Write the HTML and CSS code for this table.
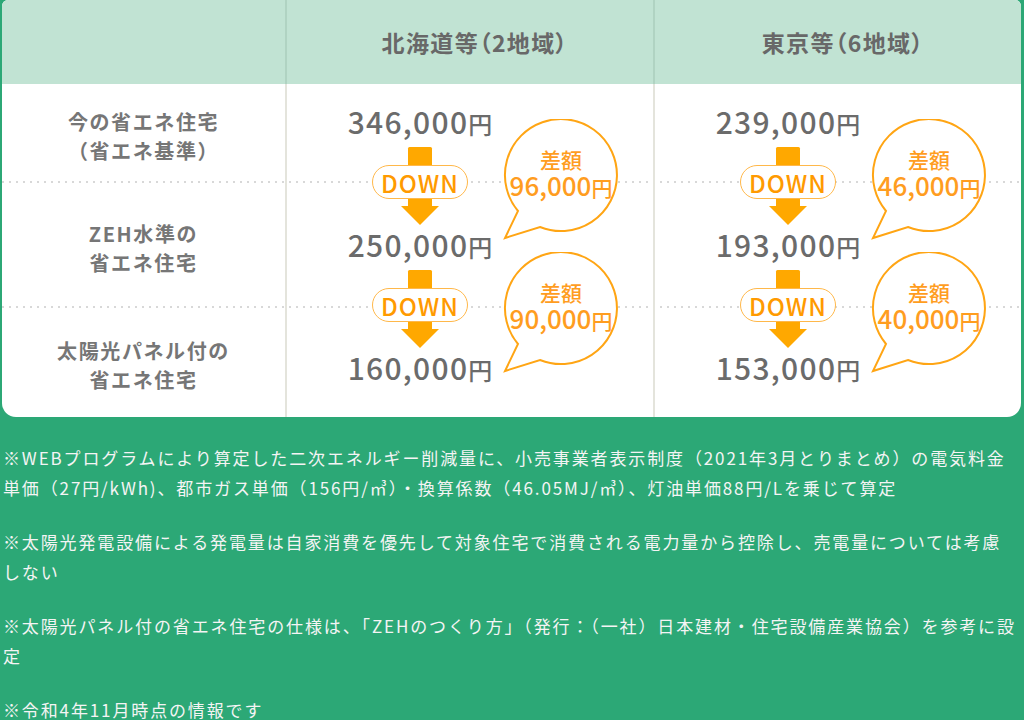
FILE: index.html
```html
<!DOCTYPE html>
<html lang="ja">
<head>
<meta charset="utf-8">
<title>光熱費比較</title>
<link rel="stylesheet" href="styles.css">
</head>
<body>
<div class="card">
  <div class="head">
    <div class="hcell"></div>
    <div class="hcell">北海道等（2地域）</div>
    <div class="hcell">東京等（6地域）</div>
  </div>
  <div class="grid">
    <div class="rowline r1"></div>
    <div class="rowline r2"></div>
    <div class="rowline r3"></div>
    <div class="label r1">今の省エネ住宅<br>（省エネ基準）</div>
    <div class="label r2">ZEH水準の<br>省エネ住宅</div>
    <div class="label r3">太陽光パネル付の<br>省エネ住宅</div>

    <div class="data c2">
      <div class="stack">
        <div class="price">346,000<small>円</small></div>
        <div class="arrow">
          <svg width="38" height="78" viewBox="0 0 38 78"><rect x="7" y="0" width="24" height="61" rx="1.5" fill="#ffa800"/><polygon points="0,59 38,59 19,78" fill="#ffa800"/></svg>
          <div class="pill">DOWN</div>
        </div>
        <div class="price">250,000<small>円</small></div>
        <div class="arrow">
          <svg width="38" height="78" viewBox="0 0 38 78"><rect x="7" y="0" width="24" height="61" rx="1.5" fill="#ffa800"/><polygon points="0,59 38,59 19,78" fill="#ffa800"/></svg>
          <div class="pill">DOWN</div>
        </div>
        <div class="price">160,000<small>円</small></div>
      </div>
      <div class="bubbles">
        <div class="bubble">
          <svg width="122" height="122" viewBox="0 0 122 122"><path d="M16 92 A56 56 0 1 1 38 108 L3 119 Z" fill="#fff" stroke="#ffa514" stroke-width="2" stroke-linejoin="miter"/></svg>
          <div class="btxt"><span class="bl">差額</span><span class="bn">96,000<small>円</small></span></div>
        </div>
        <div class="bubble">
          <svg width="122" height="122" viewBox="0 0 122 122"><path d="M16 92 A56 56 0 1 1 38 108 L3 119 Z" fill="#fff" stroke="#ffa514" stroke-width="2" stroke-linejoin="miter"/></svg>
          <div class="btxt"><span class="bl">差額</span><span class="bn">90,000<small>円</small></span></div>
        </div>
      </div>
    </div>

    <div class="data c3">
      <div class="stack">
        <div class="price">239,000<small>円</small></div>
        <div class="arrow">
          <svg width="38" height="78" viewBox="0 0 38 78"><rect x="7" y="0" width="24" height="61" rx="1.5" fill="#ffa800"/><polygon points="0,59 38,59 19,78" fill="#ffa800"/></svg>
          <div class="pill">DOWN</div>
        </div>
        <div class="price">193,000<small>円</small></div>
        <div class="arrow">
          <svg width="38" height="78" viewBox="0 0 38 78"><rect x="7" y="0" width="24" height="61" rx="1.5" fill="#ffa800"/><polygon points="0,59 38,59 19,78" fill="#ffa800"/></svg>
          <div class="pill">DOWN</div>
        </div>
        <div class="price">153,000<small>円</small></div>
      </div>
      <div class="bubbles">
        <div class="bubble">
          <svg width="122" height="122" viewBox="0 0 122 122"><path d="M16 92 A56 56 0 1 1 38 108 L3 119 Z" fill="#fff" stroke="#ffa514" stroke-width="2" stroke-linejoin="miter"/></svg>
          <div class="btxt"><span class="bl">差額</span><span class="bn">46,000<small>円</small></span></div>
        </div>
        <div class="bubble">
          <svg width="122" height="122" viewBox="0 0 122 122"><path d="M16 92 A56 56 0 1 1 38 108 L3 119 Z" fill="#fff" stroke="#ffa514" stroke-width="2" stroke-linejoin="miter"/></svg>
          <div class="btxt"><span class="bl">差額</span><span class="bn">40,000<small>円</small></span></div>
        </div>
      </div>
    </div>
  </div>
</div>

<div class="notes">
  <p>※WEBプログラムにより算定した二次エネルギー削減量に、小売事業者表示制度（2021年3月とりまとめ）の電気料金<br>単価（27円/kWh)、都市ガス単価（156円/㎥）・換算係数（46.05MJ/㎥）、灯油単価88円/Lを乗じて算定</p>
  <p>※太陽光発電設備による発電量は自家消費を優先して対象住宅で消費される電力量から控除し、売電量については考慮<br>しない</p>
  <p>※太陽光パネル付の省エネ住宅の仕様は、「ZEHのつくり方」（発行：（一社）日本建材・住宅設備産業協会）を参考に設<br>定</p>
  <p>※令和4年11月時点の情報です</p>
</div>
</body>
</html>
```

FILE: styles.css
```css
* { box-sizing: border-box; }
html, body { margin: 0; }
body {
  background: #2ca876;
  font-family: "Noto Sans CJK JP", "Noto Sans", sans-serif;
  width: 1024px;
  height: 720px;
  overflow: hidden;
}

.card {
  margin: 0 3px 0 2px;
  background: #fff;
  border-radius: 6px 6px 14px 14px;
  overflow: hidden;
}

.head {
  display: grid;
  grid-template-columns: 283px 368px 368px;
  height: 84px;
  background: #c1e3d3;
}
.hcell {
  display: flex;
  align-items: center;
  justify-content: center;
  font-size: 23px;
  font-weight: 700;
  color: #686868;
  font-feature-settings: "palt";
  letter-spacing: 0.06em;
  padding: 0 0 0 10px;
}
.hcell + .hcell { border-left: 2px solid rgba(60, 100, 70, 0.12); }

.grid {
  display: grid;
  grid-template-columns: 283px 368px 368px;
  grid-template-rows: 99px 125px 109px;
}
.rowline {
  grid-column: 1 / -1;
  background-image: linear-gradient(to right, #d8d8d8 2px, transparent 2px);
  background-size: 7px 2px;
  background-repeat: repeat-x;
  background-position: 0 100%;
}
.rowline.r3 { background: none; }
.r1 { grid-row: 1; }
.r2 { grid-row: 2; }
.r3 { grid-row: 3; }

.label {
  grid-column: 1;
  display: flex;
  align-items: center;
  justify-content: center;
  text-align: center;
  font-size: 20px;
  line-height: 29px;
  font-weight: 700;
  color: #767676;
  letter-spacing: 0.08em;
  padding-top: 4px;
}

.data {
  grid-row: 1 / -1;
  border-left: 2px solid #e4e4dc;
  display: flex;
  padding-left: 53px;
}
.c2 { grid-column: 2; }
.c3 { grid-column: 3; }

.stack {
  width: 160px;
  display: flex;
  flex-direction: column;
  align-items: center;
  padding-top: 21px;
}
.price {
  height: 32px;
  font-size: 30px;
  line-height: 32px;
  font-weight: 500;
  color: #6b6b6b;
  letter-spacing: 1.3px;
  white-space: nowrap;
}
.price small { font-size: 24px; letter-spacing: 0; line-height: 0; }

.arrow {
  display: grid;
  justify-items: center;
  height: 78px;
  margin: 10px 0 3px;
}
.arrow > * { grid-area: 1 / 1; }
.arrow svg { display: block; }
.pill {
  align-self: start;
  margin-top: 18px;
  width: 96px;
  height: 34px;
  border: 1.5px solid #ffb84a;
  border-radius: 17px;
  background: #fff;
  color: #ff9a00;
  font-size: 24px;
  font-weight: 500;
  letter-spacing: 1px;
  display: flex;
  align-items: center;
  justify-content: center;
}

.bubbles {
  display: flex;
  flex-direction: column;
  gap: 11px;
  padding-top: 35px;
  margin-left: 2px;
}
.bubble {
  display: grid;
  width: 122px;
  height: 122px;
}
.bubble > * { grid-area: 1 / 1; }
.bubble svg { display: block; }
.btxt {
  width: 118px;
  height: 112px;
  display: flex;
  flex-direction: column;
  align-items: center;
  justify-content: center;
  color: #ff9d1f;
}
.bl { font-size: 21px; line-height: 22px; font-weight: 500; }
.bn { font-size: 26px; line-height: 30px; font-weight: 500; white-space: nowrap; }
.bn small { font-size: 21px; }

.notes {
  padding: 26px 3px 0;
  color: #f4f4f4;
  font-size: 17px;
  line-height: 30px;
  letter-spacing: 0.11em;
}
.notes p { margin: 0 0 24px; white-space: nowrap; }
```
